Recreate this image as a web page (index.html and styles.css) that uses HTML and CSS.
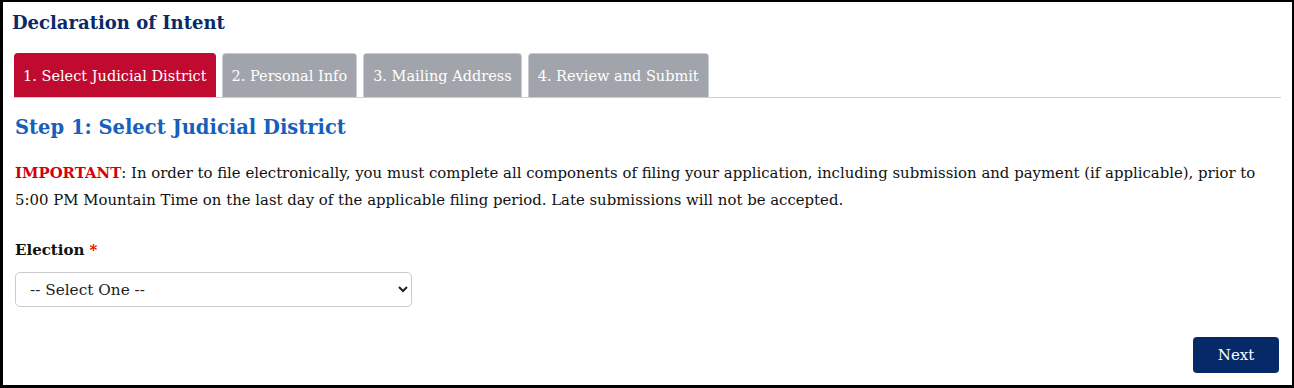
FILE: index.html
```html
<!DOCTYPE html>
<html lang="en">

<head>
    <meta charset="UTF-8">
    <meta name="viewport" content="width=device-width, initial-scale=1.0">
    <title>Declaration of Intent</title>
    <link rel="stylesheet" href="styles.css">
</head>

<body>
    <div class="frame">
        <h1 class="page-title">Declaration of Intent</h1>

        <ul class="tabs">
            <li class="tab active">1. Select Judicial District</li>
            <li class="tab">2. Personal Info</li>
            <li class="tab">3. Mailing Address</li>
            <li class="tab">4. Review and Submit</li>
        </ul>

        <div class="step">
            <h2>Step 1: Select Judicial District</h2>
            <p class="notice"><span class="important">IMPORTANT</span>: In order to file electronically, you must complete all components of filing your application, including submission and payment (if applicable), prior to 5:00 PM Mountain Time on the last day of the applicable filing period. Late submissions will not be accepted.</p>

            <div class="field">
                <label for="election">Election <span class="req">*</span></label>
                <select id="election">
                    <option>-- Select One --</option>
                </select>
            </div>

            <div class="actions">
                <button class="btn-next">Next</button>
            </div>
        </div>
    </div>
</body>

</html>
```

FILE: styles.css
```css
html,
body {
    margin: 0;
    height: 100%;
}

body {
    font-family: "DejaVu Serif", Georgia, serif;
    color: #111;
    background: #fff;
}

.frame {
    box-sizing: border-box;
    height: 388px;
    border: 2px solid #000;
    border-left-width: 3px;
    border-bottom-width: 3px;
    padding: 8px 11px 0 9px;
}

.page-title {
    margin: 0 0 17px 0;
    font-size: 18px;
    color: #0a2a66;
    line-height: 26px;
}

.tabs {
    list-style: none;
    margin: 0 0 0 2px;
    padding: 0;
    display: flex;
    gap: 6px;
    border-bottom: 1px solid #cfcfcf;
}

.tab {
    background: #a1a5ab;
    color: #fff;
    font-size: 14.5px;
    height: 44px;
    line-height: 44px;
    padding: 0 9px;
    border-radius: 4px 4px 0 0;
    border: 1px solid #c9ccd0;
    border-bottom: none;
    box-sizing: border-box;
}

.tab.active {
    background: #c00a30;
    border-color: #c00a30;
    padding: 0 8px;
}

.step {
    padding: 0 0 0 3px;
}

.step h2 {
    margin: 16px 0 0 0;
    font-size: 19.5px;
    color: #1660bb;
    line-height: 28px;
}

.notice {
    margin: 18px 0 0 0;
    font-size: 14.9px;
    line-height: 27px;
}

.important {
    color: #d4000f;
    font-weight: bold;
}

.field {
    margin-top: 24px;
}

.field label {
    display: block;
    font-weight: bold;
    font-size: 15px;
    line-height: 24px;
    margin-bottom: 10px;
}

.req {
    color: #e00;
}

.field select {
    width: 397px;
    height: 35px;
    font-family: "DejaVu Serif", Georgia, serif;
    font-size: 15.3px;
    color: #222;
    padding: 0 10px;
    border: 1px solid #ccc;
    border-radius: 5px;
    background: #fff;
}

.actions {
    display: flex;
    justify-content: flex-end;
    margin-top: 30px;
    padding-right: 2px;
}

.btn-next {
    width: 86px;
    height: 36px;
    background: #062a68;
    color: #fff;
    border: none;
    border-radius: 4px;
    font-family: "DejaVu Serif", Georgia, serif;
    font-size: 15px;
}
```
